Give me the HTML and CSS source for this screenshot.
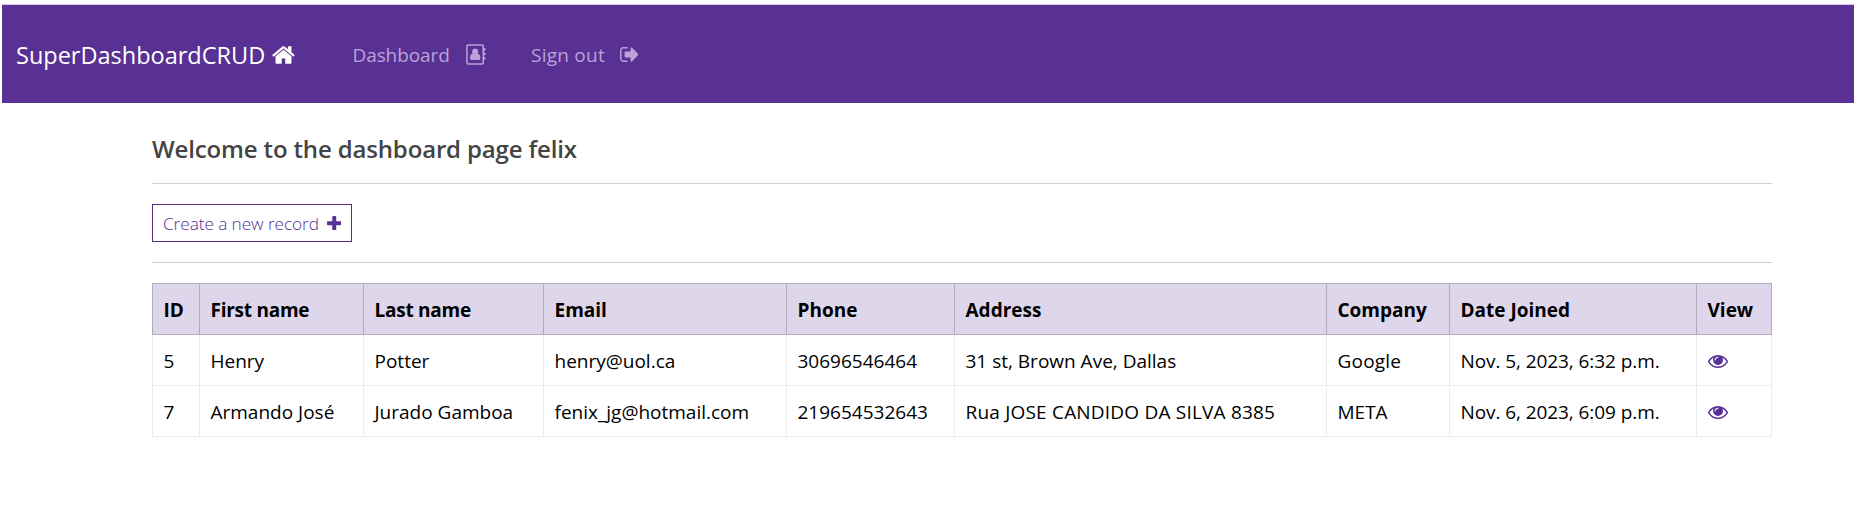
FILE: index.html
```html
<!DOCTYPE html>
<html lang="en">
<head>
<meta charset="utf-8">
<title>SuperDashboardCRUD</title>
<link rel="stylesheet" href="styles.css">
</head>
<body>
<nav class="navbar">
  <a class="brand">SuperDashboardCRUD
    <svg class="icon-home" viewBox="64 253 1664 1283"><path d="M1472 992v480q0 26-19 45t-45 19h-384v-384h-256v384h-384q-26 0-45-19t-19-45v-480q0-1 .5-3t.5-3l575-474 575 474q1 2 1 6zm223-69l-62 74q-8 9-21 11h-3q-13 0-21-7l-692-577-692 577q-12 8-24 7-13-2-21-11l-62-74q-8-10-7-23.5t11-21.5l719-599q32-26 76-26t76 26l244 204v-195q0-14 9-23t23-9h192q14 0 23 9t9 23v408l219 182q10 8 11 21.5t-7 23.5z"/></svg>
  </a>
  <a class="nav-link nav-dashboard">Dashboard
    <svg class="icon-book" viewBox="0 0 20 21"><path fill-rule="evenodd" d="M2 0.3h14.2a1.8 1.8 0 0 1 1.8 1.8v1.9h.9q.5 0 .5.5v1.8q0 .5-.5.5h-.9v1.7h.9q.5 0 .5.5v1.8q0 .5-.5.5h-.9v1.7h.9q.5 0 .5.5v1.8q0 .5-.5.5h-.9v3.1a1.8 1.8 0 0 1-1.8 1.8H2a1.8 1.8 0 0 1-1.8-1.8V2.1A1.8 1.8 0 0 1 2 .3zM2.1 1.8q-.4 0-.4.4v16.6q0 .4.4.4h14q.4 0 .4-.4V2.2q0-.4-.4-.4z"/><path d="M9.1 4.6a3.1 3.1 0 0 1 2.4 5.2c1.9 0 2.9 1.900 2.900 4.300q0 2-1.500 2H5.500q-1.500 0-1.500-2c0-2.400 1-4.300 2.800-4.300A3.1 3.1 0 0 1 9.100 4.600z"/></svg>
  </a>
  <a class="nav-link nav-signout">Sign out
    <svg class="icon-out" viewBox="64 256 1568 1280"><path d="M704 1440q0 4 1 20t.5 26.500-3 23.500-10 19.500-20.500 6.500h-320q-119 0-203.500-84.500t-84.500-203.500v-704q0-119 84.500-203.500t203.500-84.500h320q13 0 22.500 9.500t9.500 22.500q0 4 1 20t.5 26.500-3 23.500-10 19.500-20.500 6.500h-320q-66 0-113 47t-47 113v704q0 66 47 113t113 47h312l11.500 1 11.500 3 8 5.500 7 9 2 13.500zm928-544q0 26-19 45l-544 544q-19 19-45 19t-45-19-19-45v-288h-448q-26 0-45-19t-19-45v-384q0-26 19-45t45-19h448v-288q0-26 19-45t45-19 45 19l544 544q19 19 19 45z"/></svg>
  </a>
</nav>
<svg class="defs"><symbol id="eye" viewBox="0 384 1792 1152"><path d="M1664 960q-152-236-381-353 61 104 61 225 0 185-131.500 316.500t-316.500 131.500-316.500-131.500-131.500-316.500q0-121 61-225-229 117-381 353 133 205 333.500 326.500t434.500 121.500 434.500-121.500 333.500-326.500zm-720-384q0-20-14-34t-34-14q-125 0-214.500 89.500t-89.500 214.500q0 20 14 34t34 14 34-14 14-34q0-86 61-147t147-61q20 0 34-14t14-34zm848 384q0 34-20 69-140 230-376.500 368.500t-499.500 138.500-499.500-139-376.500-368q-20-35-20-69t20-69q140-229 376.500-368t499.500-139 499.500 139 376.500 368q20 35 20 69z"/></symbol></svg>
<main class="container">
  <h1 class="welcome">Welcome to the dashboard page felix</h1>
  <hr class="rule">
  <a class="create">Create a new record
    <svg class="icon-plus" viewBox="192 128 1408 1408"><path d="M1600 736v192q0 40-28 68t-68 28h-416v416q0 40-28 68t-68 28h-192q-40 0-68-28t-28-68v-416h-416q-40 0-68-28t-28-68v-192q0-40 28-68t68-28h416v-416q0-40 28-68t68-28h192q40 0 68 28t28 68v416h416q40 0 68 28t28 68z"/></svg>
  </a>
  <hr class="rule">
  <table class="records">
    <colgroup><col class="c-id"><col class="c-first"><col class="c-last"><col class="c-email"><col class="c-phone"><col class="c-address"><col class="c-company"><col class="c-date"><col class="c-view"></colgroup>
    <thead>
      <tr><th>ID</th><th class="snug">First name</th><th class="snug">Last name</th><th>Email</th><th>Phone</th><th>Address</th><th>Company</th><th>Date Joined</th><th>View</th></tr>
    </thead>
    <tbody>
      <tr><td>5</td><td>Henry</td><td>Potter</td><td>henry@uol.ca</td><td>30696546464</td><td>31 st, Brown Ave, Dallas</td><td class="loose">Google</td><td class="date">Nov. 5, 2023, 6:32 p.m.</td><td><svg class="icon-eye"><use href="#eye"/></svg></td></tr>
      <tr><td>7</td><td>Armando José</td><td>Jurado Gamboa</td><td>fenix_jg@hotmail.com</td><td>219654532643</td><td class="loose">Rua JOSE CANDIDO DA SILVA 8385</td><td>META</td><td class="date">Nov. 6, 2023, 6:09 p.m.</td><td><svg class="icon-eye"><use href="#eye"/></svg></td></tr>
    </tbody>
  </table>
</main>
</body>
</html>
```
FILE: styles.css
```css
* { box-sizing: border-box; }

body {
  margin: 0;
  padding: 4px 0 0 2px;
  height: 528px;
  overflow: hidden;
  background: #fff;
  color: #000;
  font: 19px/30px "Open Sans", sans-serif;
}

svg { fill: currentColor; flex: none; }
.defs { display: none; }

.navbar {
  display: flex;
  align-items: center;
  height: 99px;
  padding: 2px 0 0 14px;
  border-top: 1px solid #d5cbe3;
  background: #593093;
  color: #fff;
  white-space: nowrap;
}
.brand {
  display: flex;
  align-items: center;
  width: 336.5px;
  gap: 7px;
  font-size: 23.5px;
}
.icon-home { width: 23px; height: 18px; }
.nav-link {
  display: flex;
  align-items: center;
  color: #b9a3d7;
}
.nav-dashboard {
  width: 178.5px;
  gap: 16px;
  letter-spacing: -.1px;
}
.nav-signout { gap: 15px; letter-spacing: .25px; }
.icon-book { width: 20px; height: 21px; margin-bottom: 2px; }
.icon-out { width: 18.5px; height: 15px; margin-bottom: 1px; }

.container { width: 1620px; margin-left: 150px; }
.welcome {
  margin: 31px 0 19px;
  color: #444;
  font-size: 24px;
  font-weight: 600;
  letter-spacing: -.15px;
  line-height: 30px;
}
.rule {
  height: 1px;
  margin: 0;
  border: 0;
  background: #d0d0d0;
}
.create {
  display: flex;
  align-items: center;
  gap: 8px;
  width: 200px;
  height: 38px;
  margin: 20px 0;
  padding: 1px 0 0 10px;
  border: 1px solid #593180;
  color: #593196;
  font-size: 17.3px;
  font-weight: 300;
  letter-spacing: -.1px;
  white-space: nowrap;
}
.icon-plus { width: 14.5px; height: 14.5px; margin-bottom: 1px; }

.records {
  width: 1620px;
  margin-top: 20px;
  border-collapse: collapse;
  table-layout: fixed;
}
.records th,
.records td {
  height: 51px;
  padding: 2px 10px 0 10.5px;
  border: 1px solid #ececec;
  text-align: left;
  white-space: nowrap;
}
.records th {
  border-color: #b2abbb;
  background: #ded6ea;
  font-weight: 700;
}
.records .snug { letter-spacing: -.25px; }
.records .loose { letter-spacing: .2px; }
.records .date { letter-spacing: -.08px; }
.c-id { width: 47px; }
.c-first { width: 164px; }
.c-last { width: 180px; }
.c-email { width: 243px; }
.c-phone { width: 168px; }
.c-address { width: 372px; }
.c-company { width: 123px; }
.c-date { width: 247px; }
.c-view { width: 75px; }
.icon-eye {
  display: block;
  width: 20px;
  height: 13px;
  color: #593196;
}
```
